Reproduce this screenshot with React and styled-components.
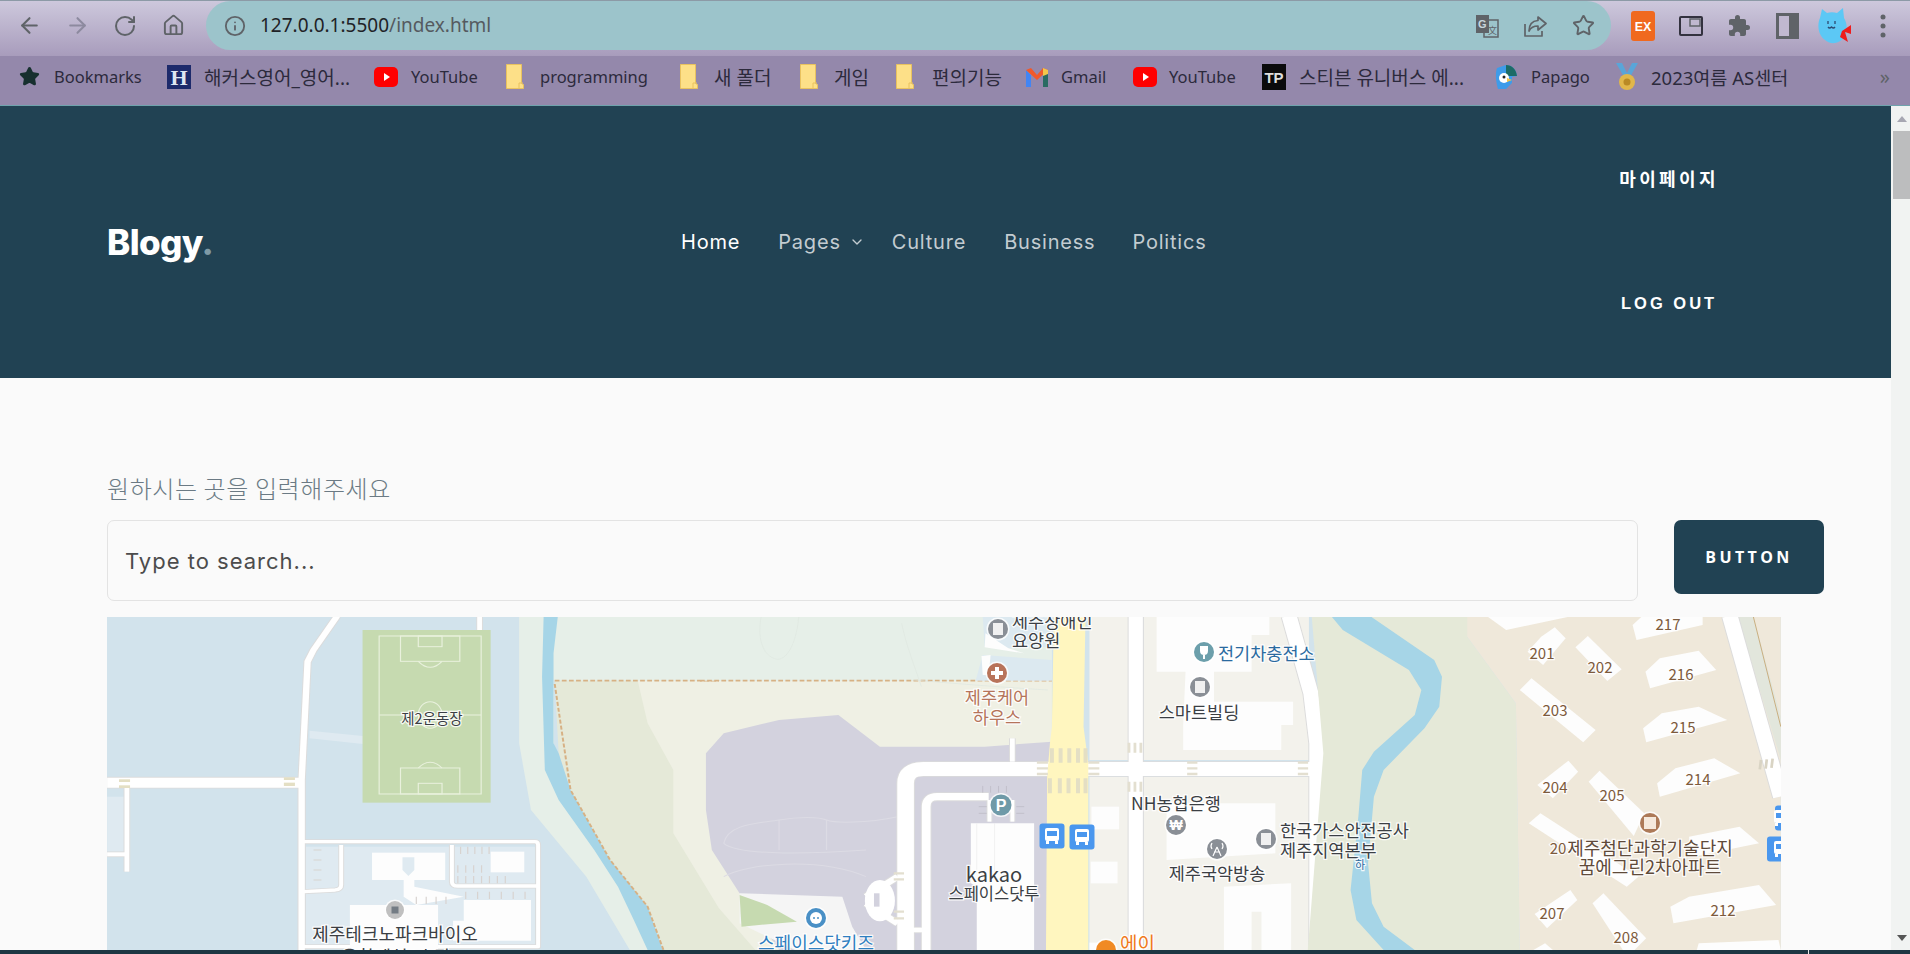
import React from 'react'
import styled, { createGlobalStyle } from 'styled-components'
import { ArrowLeft, ArrowRight, RotateCw, Home, Info, Star, ChevronDown } from 'lucide-react'

const KR = '"Noto Sans CJK KR", sans-serif'
const UI = '"Noto Sans", "Noto Sans CJK KR", sans-serif'
const SITE = 'Inter, "Noto Sans CJK KR", sans-serif'

const Global = createGlobalStyle`
  html, body { margin: 0; padding: 0; height: 100%; overflow: hidden; }
  * { box-sizing: border-box; }
`

const Screen = styled.div`
  width: 1910px;
  height: 954px;
  display: flex;
  flex-direction: column;
  overflow: hidden;
  background: #fafafa;
`

/* browser chrome */
const Toolbar = styled.div`
  height: 56px;
  flex: none;
  display: flex;
  align-items: flex-start;
  padding-left: 5px;
  border-top: 1px solid #8c9aa6;
  background: linear-gradient(#cdc8dc, #a89cbc);
`
const ToolCell = styled.div`
  width: 48px;
  height: 49px;
  flex: none;
  display: flex;
  align-items: center;
  justify-content: center;
  color: ${p => p.$color || '#5f6368'};
`
const UrlPill = styled.div`
  width: 1405px;
  height: 49px;
  margin: 0 8px 0 9px;
  flex: none;
  display: flex;
  align-items: center;
  padding: 0 4px 0 18px;
  border-radius: 25px;
  background: #9cc4cb;
  color: #5f6368;
`
const UrlText = styled.div`
  margin: -2px 0 0 14px;
  flex: 1;
  font: 19px ${UI};
  color: #555a60;
  span { color: #1f2226; }
`
const Bookmarks = styled.div`
  height: 50px;
  flex: none;
  display: flex;
  align-items: center;
  padding: 0 0 8px 19px;
  border-bottom: 1px solid #6fa3ad;
  background: #9488ab;
`
const Bookmark = styled.div`
  width: ${p => p.$w}px;
  flex: none;
  display: flex;
  align-items: center;
  gap: ${p => p.$gap || 13}px;
  font: ${p => p.$size || 16.5}px ${UI};
  color: #2c2a3c;
  white-space: nowrap;
`
const MoreChevron = styled.div`
  margin-left: auto;
  margin-right: 20px;
  font: 20px ${UI};
  color: #5f6368;
`

/* page */
const Main = styled.div`
  flex: 1;
  min-height: 0;
  display: flex;
`
const Page = styled.div`
  flex: 1;
  min-width: 0;
  display: flex;
  flex-direction: column;
  overflow: hidden;
`
const NavBar = styled.header`
  height: 272px;
  flex: none;
  display: flex;
  align-items: center;
  padding: 0 172px 0 107px;
  background: #214253;
`
const Logo = styled.div`
  width: 574px;
  flex: none;
  font: 800 35px ${SITE};
  letter-spacing: -.6px;
  color: #fff;
  span { color: #7f9aa6; }
`
const Menu = styled.nav`
  flex: 1;
  display: flex;
  align-items: center;
`
const MenuItem = styled.a`
  margin-right: ${p => p.$mr}px;
  display: flex;
  align-items: center;
  font: 400 20px ${SITE};
  letter-spacing: .8px;
  color: ${p => (p.$active ? '#fff' : '#c3ccd1')};
`
const MenuChevron = styled(ChevronDown)`
  margin-left: 8px;
`
const AuthColumn = styled.div`
  display: flex;
  flex-direction: column;
  align-items: center;
  gap: 102px;
`
const AuthLink = styled.a`
  font: bold ${p => p.$size}px/21px "Liberation Sans", ${KR};
  letter-spacing: ${p => p.$ls}px;
  color: #fff;
`
const Section = styled.section`
  padding: 94px 0 0 107px;
`
const SearchLabel = styled.div`
  height: 32px;
  margin-bottom: 16px;
  font: 300 24px/32px ${KR};
  letter-spacing: .6px;
  color: #6b7a84;
`
const SearchRow = styled.div`
  display: flex;
  align-items: flex-start;
  gap: 36px;
  margin-bottom: 16px;
`
const SearchInput = styled.input`
  width: 1531px;
  height: 81px;
  padding: 0 17px;
  border: 1px solid #e3e3e3;
  border-radius: 7px;
  outline: none;
  background: #fafafa;
  font: 400 22px ${SITE};
  letter-spacing: 1px;
  color: #444;
  &::placeholder { color: #4c4c4c; opacity: 1; }
`
const SearchButton = styled.button`
  width: 150px;
  height: 74px;
  border: none;
  border-radius: 7px;
  background: #214253;
  font: 700 16px "Open Sans", sans-serif;
  letter-spacing: 3.4px;
  color: #fff;
`
const MapFrame = styled.svg`
  display: block;
  width: 1674px;
  height: 333px;
  background: #d2e3ec;
`
const MapLabel = styled.text`
  font: ${p => p.$weight || 400} ${p => p.$size || 17.5}px ${KR};
  fill: ${p => p.$color || '#3b3f44'};
  stroke: #fff;
  stroke-width: 2.5px;
  stroke-opacity: .85;
  paint-order: stroke;
  text-anchor: ${p => p.$anchor || 'middle'};
  dominant-baseline: central;
`
const Scrollbar = styled.div`
  width: 19px;
  flex: none;
  display: flex;
  flex-direction: column;
  background: #f1f3f2;
`
const ScrollUp = styled.div`
  height: 25px;
  flex: none;
  display: flex;
  align-items: center;
  justify-content: center;
  &::before {
    content: '';
    border: 5px solid transparent;
    border-top: 0;
    border-bottom: 6px solid #a7a7b2;
    margin-left: 2px;
  }
`
const ScrollThumb = styled.div`
  height: 68px;
  margin-left: 2px;
  flex: none;
  background: #bcbdbe;
`
const ScrollDown = styled.div`
  margin-top: auto;
  height: 25px;
  display: flex;
  align-items: center;
  justify-content: center;
  &::before {
    content: '';
    border: 5px solid transparent;
    border-bottom: 0;
    border-top: 6px solid #555;
    margin-left: 2px;
  }
`
const BottomStrip = styled.div`
  position: relative;
  height: 4px;
  flex: none;
  background: #1d3743;
  &::after {
    content: '';
    position: absolute;
    left: 1808px;
    top: 0;
    width: 1px;
    height: 4px;
    background: #e8e8e8;
  }
`

/* chrome icons */
const TranslateIcon = () => (
  <svg width="24" height="24" viewBox="0 0 24 24">
    <rect x="9" y="6" width="14" height="17" fill="none" stroke="#5f6368" strokeWidth="1.5" />
    <rect x="1" y="1" width="13" height="18" fill="#5f6368" />
    <text x="3" y="14" fontSize="11" fontWeight="700" fontFamily="Liberation Sans" fill="#c7d5dc">G</text>
    <text x="13" y="20" fontSize="9" fontFamily={KR} fill="#5f6368">文</text>
  </svg>
)
const ShareIcon = () => (
  <svg width="24" height="24" viewBox="0 0 24 24" fill="none" stroke="#5f6368" strokeWidth="1.7" strokeLinejoin="round">
    <path d="M2 10v12h17v-5" />
    <path d="M15 3l8 6.5-8 6.5v-4c-4 0-7 1-9 5 0-6 3-10 9-10.500z" />
  </svg>
)
const ExIcon = () => (
  <svg width="24" height="30" viewBox="0 0 24 30">
    <rect width="24" height="30" rx="3" fill="#f0691f" />
    <text x="12" y="20" textAnchor="middle" fontSize="12.500" fontWeight="700" fontFamily="Liberation Sans" fill="#fff">EX</text>
  </svg>
)
const PipIcon = () => (
  <svg width="24" height="20" viewBox="0 0 24 20" fill="none" stroke="#33323f" strokeWidth="2">
    <rect x="1" y="1" width="22" height="18" rx="1" />
    <rect x="11" y="3" width="10" height="7" fill="#c0b8d0" strokeWidth="1.500" stroke="#5f6368" />
  </svg>
)
const PuzzleIcon = () => (
  <svg width="24" height="24" viewBox="0 0 24 24" fill="#5f6368">
    <path d="M20.500 11H19V7c0-1.100-.9-2-2-2h-4V3.500a2.500 2.500 0 0 0-5 0V5H4c-1.100 0-2 .9-2 2v3.800h1.500a2.700 2.700 0 0 1 0 5.400H2V20c0 1.100.9 2 2 2h3.800v-1.500a2.700 2.700 0 0 1 5.400 0V22H17c1.100 0 2-.9 2-2v-4h1.500a2.500 2.500 0 0 0 0-5z" />
  </svg>
)
const SidebarIcon = () => (
  <svg width="23" height="26" viewBox="0 0 23 26">
    <rect width="23" height="26" fill="#5f6368" />
    <rect x="3" y="3" width="10" height="20" fill="#c0b8d0" />
  </svg>
)
const AvatarIcon = () => (
  <svg width="34" height="38" viewBox="0 0 34 38">
    <path d="M4 2l5 4c3-1 7-1 10 0l6-5 1 10c4 6 3 14 0 19-4 7-14 8-19 3C0 28-1 18 2 11z" fill="#5cc8f5" />
    <path d="M10 14v3M17 14v3M10 20q1.500 2 3.500 0q2 2 3.500 0" stroke="#2d4a70" strokeWidth="1.300" fill="none" />
    <path d="M24 24l9-6v9l-6-2 3 10-8-5z" fill="#ee1c1c" />
  </svg>
)
const DotsIcon = () => (
  <svg width="6" height="24" viewBox="0 0 6 24" fill="#5f6368">
    <circle cx="3" cy="3" r="2.500" /><circle cx="3" cy="12" r="2.500" /><circle cx="3" cy="21" r="2.500" />
  </svg>
)
const BookmarkStar = () => <Star size={21} fill="#17302f" color="#17302f" />
const HackersIcon = () => (
  <svg width="24" height="24" viewBox="0 0 24 24">
    <rect width="24" height="24" fill="#1d2a6b" />
    <text x="12" y="20" textAnchor="middle" fontSize="22" fontWeight="700" fontFamily="Liberation Serif" fill="#dfe6f2">H</text>
  </svg>
)
const YoutubeIcon = () => (
  <svg width="24" height="20" viewBox="0 0 24 20">
    <rect width="24" height="20" rx="5" fill="#f00" />
    <path d="M10 6l6 4-6 4z" fill="#fff" />
  </svg>
)
const FolderIcon = () => (
  <svg width="18" height="25" viewBox="0 0 18 25">
    <path d="M.5.5h15v19l2 1v4H.5z" fill="#fde088" stroke="#e9c25f" />
    <path d="M13 24v-5h4" fill="none" stroke="#e9c25f" />
  </svg>
)
const GmailIcon = () => (
  <svg width="22" height="20" viewBox="0 0 22 20">
    <path d="M0 3v17h5V8z" fill="#4285f4" />
    <path d="M17 8v12h5V3z" fill="#2a6b62" />
    <path d="M0 3l5-2 6 7 6-7 5 2-11 10z" fill="#f1592a" />
    <path d="M17 1l5 2v4l-5 2z" fill="#f4c74b" />
  </svg>
)
const TpIcon = () => (
  <svg width="24" height="26" viewBox="0 0 24 26">
    <rect width="24" height="26" fill="#0b0b0c" />
    <text x="12" y="19" textAnchor="middle" fontSize="15" fontWeight="700" fontFamily="Liberation Sans" fill="#ddd">TP</text>
  </svg>
)
const PapagoIcon = () => (
  <svg width="24" height="26" viewBox="0 0 24 26">
    <path d="M3 4l9-3c6 0 10 4 11 11l-5 1v6l-6 6H4C2 18 1 10 3 4z" fill="#3e9be9" />
    <path d="M12 1c6 0 10 4 11 11H12z" fill="#1d6b66" />
    <circle cx="10" cy="14" r="5" fill="#fff" />
    <circle cx="10" cy="13" r="1.500" fill="#222" />
    <path d="M13 14l5 2-5 2z" fill="#f6c342" />
  </svg>
)
const MedalIcon = () => (
  <svg width="24" height="28" viewBox="0 0 24 28">
    <path d="M1 0h6l5 10 5-10h6l-8 14H9z" fill="#5aa5d8" />
    <circle cx="12" cy="19" r="8" fill="#e1b74a" />
    <circle cx="12" cy="19" r="3.500" fill="#b98a25" />
  </svg>
)

const bookmarkList = [
  { w: 148, label: 'Bookmarks', icon: <BookmarkStar />, gap: 14 },
  { w: 207, label: '해커스영어_영어...', icon: <HackersIcon />, size: 19 },
  { w: 132, label: 'YouTube', icon: <YoutubeIcon /> },
  { w: 174, label: 'programming', icon: <FolderIcon />, gap: 16 },
  { w: 120, label: '새 폴더', icon: <FolderIcon />, gap: 16, size: 19 },
  { w: 96, label: '게임', icon: <FolderIcon />, gap: 16, size: 19 },
  { w: 130, label: '편의기능', icon: <FolderIcon />, gap: 18, size: 19 },
  { w: 107, label: 'Gmail', icon: <GmailIcon /> },
  { w: 129, label: 'YouTube', icon: <YoutubeIcon />, gap: 12 },
  { w: 232, label: '스티븐 유니버스 에...', icon: <TpIcon />, size: 19 },
  { w: 121, label: 'Papago', icon: <PapagoIcon /> },
  { w: 190, label: '2023여름 AS센터', icon: <MedalIcon />, gap: 12, size: 18.5 },
]

/* map drawing helpers: coordinates below were read off the reference crops */
const RoadEdge = ({ d, w }) => <path d={d} fill="none" stroke="#dcdcdc" strokeWidth={w + 5} strokeLinejoin="round" />
const RoadTop = ({ d, w }) => <path d={d} fill="none" stroke="#fff" strokeWidth={w} strokeLinejoin="round" />
const Roads = ({ list }) => (
  <>
    {list.map(([d, w], i) => <RoadEdge key={i} d={d} w={w} />)}
    {list.map(([d, w], i) => <RoadTop key={i} d={d} w={w} />)}
  </>
)
const Poly = ({ p, c }) => <polygon points={p} fill={c} />
const Dot = ({ x, y, c, r = 10, children }) => (
  <g transform={`translate(${x} ${y})`}>
    <circle r={r + 1.5} fill="#fff" opacity=".8" />
    <circle r={r} fill={c} />
    {children}
  </g>
)
const BuildingGlyph = () => <rect x="-5" y="-6" width="10" height="12" fill="#f0f0f0" />
const BusStop = ({ x, y, w = 25, h = 25 }) => (
  <g transform={`translate(${x} ${y})`}>
    <rect x={-w / 2} y={-h / 2} width={w} height={h} rx="3" fill="#4a97ee" />
    <rect x="-7" y="-8" width="14" height="13" rx="2" fill="#fff" />
    <rect x="-5" y="-5" width="10" height="5" fill="#4a97ee" />
    <rect x="-6" y="5" width="3" height="3" fill="#fff" />
    <rect x="3" y="5" width="3" height="3" fill="#fff" />
  </g>
)

const westRoads = [
  ['M600 18L540 120 525 155 510 510V1020', 16],
  ['M18 518H515', 30],
  ['M68 530V785', 12],
  ['M18 733H70', 12],
  ['M960 18V60', 12],
  ['M515 695H1100Q1108 695 1108 705V1010H515', 10],
  ['M610 705V825Q610 838 595 840L515 845', 10],
  ['M890 705V815Q890 828 905 828H1105', 10],
]
const centerRoads = [
  ['M520 1020V520Q520 477 565 477H1568', 42],
  ['M790 385V455', 12],
  ['M572 1020V590Q572 560 600 560H730', 22],
  ['M732 570V635', 10],
  ['M790 570V635', 10],
  ['M1102 18V1020', 36],
  ['M1490 18L1545 250 1560 400V1020', 38],
  ['M420 860L500 800M420 880L500 940', 18],
  ['M520 960H572', 14],
]
const apartments = [
  '620,80 655,52 683,85 625,165 585,125',
  '708,112 740,78 827,178 790,213',
  '565,240 595,205 760,360 728,397',
  '610,525 690,452 715,485 650,565',
  '742,515 770,482 885,610 858,678',
  '588,640 618,610 870,800 840,830 760,770',
  '603,912 695,840 713,870 635,955',
  '752,880 780,850 890,985 860,1020 830,1020',
  '855,45 880,18 1035,18 1035,45 865,90',
  '888,185 925,145 1025,122 1070,180 900,235',
  '882,355 930,310 1025,290 1098,330 890,397',
  '918,520 965,475 1065,445 1132,490 925,560',
  '1000,680 1130,650 1180,700 1010,740',
  '952,890 1000,860 1180,825 1224,885 960,940',
  '600,1020 630,1000 650,1020',
  '1020,1020 1025,1000 1230,990 1236,1020',
]
const numbers = [
  ['217', 1668, 623], ['201', 1542, 652], ['202', 1600, 666], ['216', 1681, 673],
  ['203', 1555, 709], ['215', 1683, 726], ['204', 1555, 786], ['205', 1612, 794],
  ['214', 1698, 778], ['207', 1552, 912], ['212', 1723, 909], ['208', 1626, 936],
  ['20', 1558, 847],
]

const MapView = () => (
  <MapFrame viewBox="107 617 1674 333">
    {/* left part: lots, field, river */}
    <g transform="translate(100 610) scale(.3954 .3333)">
      <Poly c="#e6efe8" p="1060,18 1568,18 1568,212 1148,212 1148,430 1190,540 1300,760 1420,1020 1340,1020 1230,800 1090,600 1060,400" />
      <Poly c="#e5e9d8" p="1150,212 1568,212 1568,1020 1425,1020 1385,890 1290,750 1190,540 1160,430" />
      <Poly c="#eff0e4" p="1360,212 1568,212 1568,900 1450,670 1450,480 1385,340" />
      <Poly c="#a6d5e7" p="1122,18 1158,18 1147,130 1147,400 1160,430 1190,540 1290,750 1385,890 1423,1020 1385,1020 1350,930 1310,830 1250,720 1160,570 1125,480 1118,200" />
      <path d="M1150 212H1568M1150 222L1190 540 1290 750 1385 890 1425 1020" fill="none" stroke="#d7b184" strokeWidth="5" strokeDasharray="12 6" />
      <Poly c="#dfeaf1" p="530,362 665,378 665,402 530,385" />
      <Poly c="#dfeaf1" p="18,560 65,560 65,725 18,725" />
      <Poly c="#dfeaf1" p="520,710 1100,710 1100,1010 520,1010" />
      <Roads list={westRoads} />
      <Poly c="#e4dfc4" p="48,508 76,508 76,516 48,516" />
      <Poly c="#e4dfc4" p="48,526 76,526 76,534 48,534" />
      <Poly c="#e4dfc4" p="465,502 493,502 493,510 465,510" />
      <Poly c="#e4dfc4" p="465,518 493,518 493,528 465,528" />
      <rect x="688" y="728" width="185" height="82" fill="#fdfdfd" />
      <rect x="988" y="725" width="85" height="62" fill="#fdfdfd" />
      <rect x="632" y="885" width="223" height="135" fill="#fdfdfd" />
      <Poly c="#fdfdfd" p="893,932 920,932 920,870 1090,870 1090,992 893,992" />
      <Poly c="#dfeaf1" p="765,742 795,742 795,780 780,798 765,780" />
      <Poly c="#fdfdfd" p="768,800 795,800 795,830 920,860 800,885 768,860" />
      <path d="M912 710v22M930 710v22M948 710v22M966 710v22M984 710v22M905 766v22M925 766v22M945 766v22M965 766v22M905 798v22M925 798v22M945 798v22M965 798v22M985 798v22M1005 798v22M1025 798v22M925 845v22M955 845v22M985 845v22M1015 845v22M1045 845v22M1075 845v22M800 860v22M825 860v22M850 860v22M875 860v22M540 720h20M540 750h20M540 780h20M540 810h20" stroke="#d8d3d0" strokeWidth="3" />
      <rect x="664" y="60" width="324" height="518" fill="#c6dab0" />
      <g fill="none" stroke="#e9f1dd" strokeWidth="3">
        <rect x="706" y="78" width="258" height="474" />
        <path d="M706 315H964" />
        <ellipse cx="835" cy="315" rx="30" ry="40" />
        <rect x="760" y="78" width="150" height="76" />
        <rect x="805" y="78" width="60" height="32" />
        <path d="M805 154Q835 190 865 154" />
        <rect x="760" y="474" width="150" height="78" />
        <rect x="805" y="520" width="60" height="32" />
        <path d="M805 474Q835 440 865 474" />
      </g>
    </g>

    {/* middle part: parking lot, yellow road, blocks */}
    <g transform="translate(700 610) scale(.3954 .3333)">
      <Poly c="#e6efe8" p="0,18 890,18 890,212 0,212" />
      <Poly c="#eff0e4" p="48,212 890,212 890,1020 48,1020" />
      <Poly c="#e5e9d8" p="48,895 140,1020 48,1020" />
      <path d="M0 212H890" fill="none" stroke="#d7b184" strokeWidth="5" strokeDasharray="12 6" />
      <path d="M155 18c-10 60 0 120 40 130 30 0 50-60 55-130M510 40c10 60 30 120 50 190M540 210c100 10 200 20 340 30" fill="none" stroke="#dfe8e0" strokeWidth="2" />
      <Poly c="#dce9f0" p="715,18 890,18 890,110 780,115 720,110" />
      <Poly c="#dce9f0" p="715,135 890,150 890,212 697,212" />
      <Poly c="#fdfdfd" p="722,70 780,115 820,130 720,112" />
      <Poly c="#fdfdfd" p="712,138 735,135 730,195 715,195" />
      <Poly c="#d3d2de" p="15,430 60,370 200,330 350,315 455,410 720,410 890,395 880,1020 200,1020 100,850 30,720 15,600" />
      <g fill="none" stroke="#dcdbe4" strokeWidth="3">
        <path d="M60 700C70 640 150 640 200 630S300 620 320 630 420 640 500 620" />
        <path d="M200 630V720M320 630V720M60 700C100 740 300 730 420 720" />
        <path d="M60 800C120 760 300 740 420 800" />
      </g>
      <Poly c="#f5f5f5" p="100,850 360,860 385,950 420,1020 240,1020 100,940" />
      <Poly c="#c6dab0" p="100,855 170,885 245,935 105,950" />
      <Poly c="#f3f2ec" p="985,18 1085,18 1085,450 985,450" />
      <Poly c="#f3f2ec" p="1122,18 1540,18 1540,450 1122,450" />
      <Poly c="#f3f2ec" p="985,500 1085,500 1085,1020 985,1020" />
      <Poly c="#f3f2ec" p="1122,500 1545,500 1545,1020 1122,1020" />
      <Roads list={centerRoads} />
      <ellipse cx="455" cy="872" rx="38" ry="62" fill="#fff" />
      <rect x="440" y="850" width="14" height="40" fill="#d3d2de" />
      <Poly c="#fdfdfd" p="685,640 845,640 845,1020 700,1020 700,830 685,820" />
      <path d="M745 640V790M700 640V790" stroke="#ececec" strokeWidth="2" />
      <path d="M715 528v20M735 528v20M755 528v20M775 528v20M705 590h20M705 610h20M800 590h20M800 610h20" stroke="#bbb9c4" strokeWidth="2" />
      <Poly c="#fff6bf" p="895,18 975,18 970,350 982,460 982,1020 875,1020 878,500 885,400 890,350" />
      <Poly c="#fdfdfd" p="1155,18 1440,18 1440,75 1395,75 1395,185 1300,185 1300,275 1500,275 1500,345 1470,345 1470,420 1222,420 1222,345 1228,185 1155,185" />
      <Poly c="#fdfdfd" p="1180,580 1455,580 1455,730 1180,750" />
      <Poly c="#fdfdfd" p="1325,830 1495,820 1495,1020 1420,1020 1420,905 1395,905 1395,1020 1325,1020" />
      <rect x="990" y="590" width="70" height="68" fill="#fdfdfd" />
      <rect x="988" y="755" width="68" height="65" fill="#fdfdfd" />
      <rect x="985" y="998" width="60" height="22" fill="#fdfdfd" />
      <path d="M890 415v43M912 415v43M934 415v43M956 415v43M975 415v43M885 505v45M910 505v45M932 505v45M956 505v45M975 505v45" stroke="#e4dfc4" strokeWidth="10" />
      <path d="M1085 398v30M1100 398v30M1115 398v30M1085 515v30M1100 515v30M1115 515v30M852 458h28M852 475h28M852 492h28M982 458h28M982 475h28M982 492h28M1232 458h26M1232 475h26M1232 492h26M1512 458h26M1512 475h26M1512 492h26M490 790h26M490 808h26M490 905h26M490 925h26" stroke="#e3dfd0" strokeWidth="7" />
    </g>

    {/* right part: stream, apartment complex */}
    <g transform="translate(1300 610) scale(.389 .3333)">
      <Poly c="#e5e9d8" p="30,18 480,18 430,80 555,280 565,1020 20,1020 60,430" />
      <Poly c="#a6d5e7" p="80,18 180,18 345,150 365,200 358,290 320,355 215,480 190,560 175,760 185,880 215,950 295,1020 215,1020 145,930 130,840 150,620 160,480 190,425 295,315 312,240 280,180 110,60" />
      <Poly c="#efe8da" p="430,18 1236,18 1236,1020 565,1020 555,280 430,80" />
      <Poly c="#fdfdfd" p="480,18 530,60 700,18" />
      <Poly c="#e2e6dc" p="1125,18 1165,18 1236,320 1236,450" />
      <path d="M1165 18L1236 350" stroke="#c6a877" strokeWidth="2.500" fill="none" />
      <Roads list={[['M1105 18L1236 560', 40]]} />
      <path d="M1185 450l-3 28M1200 448l-3 28M1215 446l-3 28" stroke="#d9d4c4" strokeWidth="7" />
      {apartments.map((p, i) => <Poly key={i} c="#fdfdfd" p={p} />)}
    </g>

    {/* pins */}
    <Dot x={395} y={910} c="#c0c0c0" r={9}><rect x="-3.500" y="-3.500" width="7" height="7" fill="#747c84" /></Dot>
    <Dot x={998} y={629} c="#8a8f96"><BuildingGlyph /></Dot>
    <Dot x={997} y={673} c="#b8735a"><path d="M-2-6h4v4h4v4H2v4h-4V2h-4v-4h4z" fill="#fff" /></Dot>
    <Dot x={1204} y={652} c="#6c9fab"><path d="M-4-6v5c0 3 2 4 4 4s4-1 4-4v-5zM-1 3h2v4h-2z" fill="#fff" /></Dot>
    <Dot x={1200} y={687} c="#8a8f96"><BuildingGlyph /></Dot>
    <Dot x={1001} y={805} c="#6f9aa8" r={10.500}>
      <text textAnchor="middle" y="6" fontSize="16" fontWeight="700" fontFamily="Liberation Sans" fill="#fff">P</text>
    </Dot>
    <Dot x={1176} y={825} c="#8a8f96">
      <text textAnchor="middle" y="5" fontSize="14" fontWeight="700" fontFamily="Liberation Sans" fill="#fff">₩</text>
    </Dot>
    <Dot x={1217} y={849} c="#8a8f96">
      <path d="M0-2L-4 7M0-2L4 7M-3 3H3M-5-6q-2 3 0 6M5-6q2 3 0 6" stroke="#fff" strokeWidth="1.200" fill="none" />
    </Dot>
    <Dot x={1266} y={839} c="#8a8f96"><BuildingGlyph /></Dot>
    <Dot x={816} y={918} c="#4a90c6">
      <circle r="6" fill="#fff" /><circle cx="-2" r="1" fill="#4a90c6" /><circle cx="2" r="1" fill="#4a90c6" />
    </Dot>
    <Dot x={1106} y={950} c="#f08a24" />
    <Dot x={1650} y={823} c="#ad7a58"><rect x="-6" y="-6" width="12" height="12" fill="#f5e9dc" /></Dot>
    <BusStop x={1052} y={836} />
    <BusStop x={1082} y={837} />
    <BusStop x={1781} y={818} w={12} />
    <BusStop x={1781} y={849} w={28} />

    {/* labels */}
    <MapLabel x={432} y={717} $size={14.500}>제2운동장</MapLabel>
    <MapLabel x={395} y={933} $size={18}>제주테크노파크바이오</MapLabel>
    <MapLabel x={396} y={956} $size={18}>융합벤처2호관</MapLabel>
    <MapLabel x={1012} y={620} $anchor="start">제주장애인</MapLabel>
    <MapLabel x={1012} y={639} $anchor="start">요양원</MapLabel>
    <MapLabel x={997} y={696} $color="#b5745a">제주케어</MapLabel>
    <MapLabel x={997} y={716} $color="#b5745a">하우스</MapLabel>
    <MapLabel x={1218} y={652} $anchor="start" $color="#2a6a9f">전기차충전소</MapLabel>
    <MapLabel x={1199} y={711}>스마트빌딩</MapLabel>
    <MapLabel x={1176} y={802}>NH농협은행</MapLabel>
    <MapLabel x={1217} y={872}>제주국악방송</MapLabel>
    <MapLabel x={994} y={873} $size={20}>kakao</MapLabel>
    <MapLabel x={994} y={893} $size={16.500}>스페이스닷투</MapLabel>
    <MapLabel x={816} y={942} $color="#2f7fc0" $size={18}>스페이스닷키즈</MapLabel>
    <MapLabel x={1120} y={942} $anchor="start" $color="#f07a1b" $size={19}>에이</MapLabel>
    <MapLabel x={1280} y={829} $anchor="start">한국가스안전공사</MapLabel>
    <MapLabel x={1280} y={849} $anchor="start">제주지역본부</MapLabel>
    <MapLabel x={1360} y={864} $size={11} $color="#2a6a9f">하</MapLabel>
    {numbers.map(([t, x, y]) => (
      <MapLabel key={t} x={x} y={y} $size={15} $color="#7d5a3c">{t}</MapLabel>
    ))}
    <MapLabel x={1650} y={847} $size={18} $color="#5f4a3a">제주첨단과학기술단지</MapLabel>
    <MapLabel x={1650} y={866} $size={18} $color="#5f4a3a">꿈에그린2차아파트</MapLabel>
  </MapFrame>
)

const App = () => (
  <Screen>
    <Global />
    <Toolbar>
      <ToolCell><ArrowLeft size={25} /></ToolCell>
      <ToolCell $color="#8d8a9f"><ArrowRight size={25} /></ToolCell>
      <ToolCell><RotateCw size={24} /></ToolCell>
      <ToolCell><Home size={23} /></ToolCell>
      <UrlPill>
        <Info size={22} />
        <UrlText><span>127.0.0.1:5500</span>/index.html</UrlText>
        <ToolCell><TranslateIcon /></ToolCell>
        <ToolCell><ShareIcon /></ToolCell>
        <ToolCell><Star size={23} /></ToolCell>
      </UrlPill>
      <ToolCell><ExIcon /></ToolCell>
      <ToolCell><PipIcon /></ToolCell>
      <ToolCell><PuzzleIcon /></ToolCell>
      <ToolCell><SidebarIcon /></ToolCell>
      <ToolCell><AvatarIcon /></ToolCell>
      <ToolCell><DotsIcon /></ToolCell>
    </Toolbar>
    <Bookmarks>
      {bookmarkList.map((b, i) => (
        <Bookmark key={i} $w={b.w} $gap={b.gap} $size={b.size}>{b.icon}{b.label}</Bookmark>
      ))}
      <MoreChevron>»</MoreChevron>
    </Bookmarks>
    <Main>
      <Page>
        <NavBar>
          <Logo>Blogy<span>.</span></Logo>
          <Menu>
            <MenuItem $active $mr={38}>Home</MenuItem>
            <MenuItem $mr={27}>Pages<MenuChevron size={16} /></MenuItem>
            <MenuItem $mr={38}>Culture</MenuItem>
            <MenuItem $mr={37}>Business</MenuItem>
            <MenuItem $mr={0}>Politics</MenuItem>
          </Menu>
          <AuthColumn>
            <AuthLink $size={18} $ls={3.4}>마이페이지</AuthLink>
            <AuthLink $size={16.5} $ls={3}>LOG OUT</AuthLink>
          </AuthColumn>
        </NavBar>
        <Section>
          <SearchLabel>원하시는 곳을 입력해주세요</SearchLabel>
          <SearchRow>
            <SearchInput placeholder="Type to search..." />
            <SearchButton>BUTTON</SearchButton>
          </SearchRow>
          <MapView />
        </Section>
      </Page>
      <Scrollbar>
        <ScrollUp />
        <ScrollThumb />
        <ScrollDown />
      </Scrollbar>
    </Main>
    <BottomStrip />
  </Screen>
)

export default App
